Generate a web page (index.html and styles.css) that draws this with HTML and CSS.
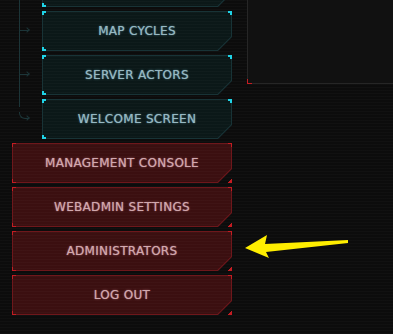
FILE: index.html
```html
<!DOCTYPE html>
<html lang="en">
<head>
  <meta charset="UTF-8">
  <meta name="viewport" content="width=device-width, initial-scale=1.0">
  <title>WebAdmin</title>
  <link rel="stylesheet" href="styles.css">
</head>
<body>
  <div class="layout">
    <nav class="sidebar">
      <div class="sub-menu">
        <a class="nav-btn teal" href="#"><span class="deco"></span></a>
        <a class="nav-btn teal stub" href="#"><span class="deco"></span><span class="label">MAP CYCLES</span></a>
        <a class="nav-btn teal stub" href="#"><span class="deco"></span><span class="label">SERVER ACTORS</span></a>
        <a class="nav-btn teal stub last" href="#"><span class="deco"></span><span class="label">WELCOME SCREEN</span></a>
      </div>
      <a class="nav-btn red" href="#"><span class="deco"></span><span class="label">MANAGEMENT CONSOLE</span></a>
      <a class="nav-btn red" href="#"><span class="deco"></span><span class="label">WEBADMIN SETTINGS</span></a>
      <a class="nav-btn red" href="#"><span class="deco"></span><span class="label">ADMINISTRATORS</span></a>
      <a class="nav-btn red" href="#"><span class="deco"></span><span class="label">LOG OUT</span></a>
    </nav>

    <section class="panel">
      <span class="panel-corner"></span>
    </section>
  </div>

  <!-- annotation arrow -->
  <svg class="pointer" width="120" height="40" viewBox="0 0 120 40">
    <polygon points="5,18 27,5 25,14 108,10 108,13 26,22 29,28" fill="#ffee00"/>
  </svg>
</body>
</html>
```

FILE: styles.css
```css
html, body {
  margin: 0;
  padding: 0;
  height: 100%;
  overflow: hidden;
}

body {
  background-color: #0c0c0c;
  background-image: repeating-linear-gradient(to bottom, rgba(255,255,255,0.018) 0, rgba(255,255,255,0.018) 1px, transparent 1px, transparent 3px);
  font-family: "DejaVu Sans", Verdana, sans-serif;
  position: relative;
}

.layout {
  display: flex;
  align-items: flex-start;
}

.sidebar {
  width: 220px;
  padding-left: 12px;
  margin-top: -33px;
  display: flex;
  flex-direction: column;
  gap: 4px;
}

.sub-menu {
  position: relative;
  padding-left: 30px;
  display: flex;
  flex-direction: column;
  gap: 4px;
}

/* tree line */
.sub-menu::before {
  content: '';
  position: absolute;
  left: 7px;
  top: 0;
  height: 140px;
  width: 1px;
  background: #1c3538;
}

.nav-btn {
  position: relative;
  height: 40px;
  display: flex;
  align-items: center;
  justify-content: center;
  text-decoration: none;
}

.nav-btn::before,
.nav-btn::after {
  content: '';
  position: absolute;
  clip-path: polygon(0 0, 100% 0, 100% calc(100% - 14px), calc(100% - 14px) 100%, 0 100%);
}

.nav-btn::before {
  inset: 0;
}

.nav-btn::after {
  inset: 1px;
  clip-path: polygon(0 0, 100% 0, 100% calc(100% - 13.6px), calc(100% - 13.6px) 100%, 0 100%);
  background-image: repeating-linear-gradient(to bottom, rgba(255,255,255,0.02) 0, rgba(255,255,255,0.02) 1px, transparent 1px, transparent 3px);
}

.teal::before { background: #183336; }
.teal::after { background-color: #0b1818; }
.red::before { background: #6e171b; }
.red::after { background-color: #3b0f10; }

.deco {
  position: absolute;
  inset: 0;
  z-index: 1;
  background-repeat: no-repeat;
}

.teal .deco {
  background-image:
    linear-gradient(#1fd3e6, #1fd3e6), linear-gradient(#1fd3e6, #1fd3e6),
    linear-gradient(#1fd3e6, #1fd3e6), linear-gradient(#1fd3e6, #1fd3e6),
    linear-gradient(#1fd3e6, #1fd3e6), linear-gradient(#1fd3e6, #1fd3e6);
  background-size: 4px 2px, 2px 4px, 4px 2px, 2px 4px, 4px 2px, 2px 4px;
  background-position: left top, left top, right top, right top, left bottom, left bottom;
}

.red .deco {
  background-image:
    linear-gradient(#c41c22, #c41c22), linear-gradient(#c41c22, #c41c22),
    linear-gradient(#c41c22, #c41c22), linear-gradient(#c41c22, #c41c22),
    linear-gradient(#c41c22, #c41c22), linear-gradient(#c41c22, #c41c22),
    linear-gradient(to bottom right, transparent 50%, #c41c22 50%);
  background-size: 4px 1px, 1px 4px, 4px 1px, 1px 4px, 4px 1px, 1px 4px, 4px 4px;
  background-position: left top, left top, right top, right top, left bottom, left bottom, right bottom;
}

.label {
  position: relative;
  z-index: 2;
  font-size: 12px;
  letter-spacing: 0.3px;
  margin-top: -1px;
}

.teal .label {
  color: #97b8c2;
  text-shadow: 0 0 1px rgba(140, 200, 215, 0.7), 0 0 3px rgba(120, 200, 220, 0.3);
}

.red .label {
  color: #d0a9af;
  text-shadow: 0 0 1px rgba(230, 160, 170, 0.7), 0 0 3px rgba(230, 150, 160, 0.3);
}

/* tree stubs with arrowheads */
.stub .deco::before {
  content: '';
  position: absolute;
  left: -22px;
  top: 19px;
  width: 9px;
  height: 1px;
  background: #1c3538;
}

.stub .deco::after {
  content: '';
  position: absolute;
  left: -17px;
  top: 17px;
  width: 3px;
  height: 3px;
  border-top: 1px solid #1c3538;
  border-right: 1px solid #1c3538;
  transform: rotate(45deg);
}

/* last branch bends into its stub */
.last .deco::before {
  left: -23px;
  top: 13px;
  width: 9px;
  height: 6px;
  background: none;
  border-left: 1px solid #1c3538;
  border-bottom: 1px solid #1c3538;
  border-bottom-left-radius: 6px;
}

.panel {
  position: relative;
  flex: 1;
  margin-left: 15px;
  height: 83px;
  background: #111111;
  border-left: 1px solid #262626;
  border-bottom: 1px solid #262626;
}

.panel-corner {
  position: absolute;
  left: -1px;
  bottom: -1px;
  width: 4px;
  height: 4px;
  border-left: 1px solid #c41c22;
  border-bottom: 1px solid #c41c22;
}

.pointer {
  position: absolute;
  left: 240px;
  top: 230px;
}
```
